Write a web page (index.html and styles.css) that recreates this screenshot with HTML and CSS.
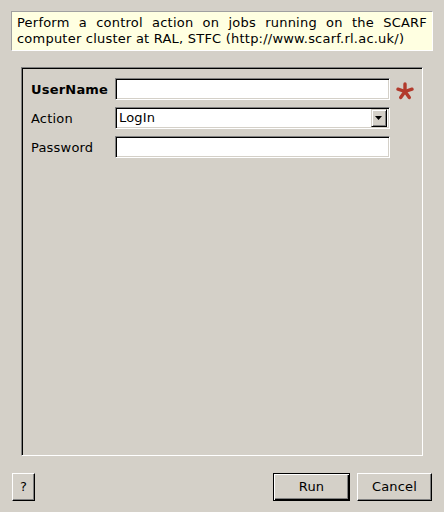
FILE: index.html
```html
<!DOCTYPE html>
<html>
<head>
<meta charset="utf-8">
<link rel="stylesheet" href="styles.css">
</head>
<body>
<div class="dialog">
  <div class="info">Perform a control action on jobs running on the SCARF computer cluster at RAL, STFC (http://www.scarf.rl.ac.uk/)</div>
  <div class="group">
    <div class="form">
      <label class="lbl bold">UserName</label>
      <div class="field"></div>
      <svg class="star" width="18" height="18" viewBox="0 0 18 18">
        <g stroke="#b23a2c" stroke-width="3.4" stroke-linecap="round">
          <line x1="9" y1="9.5" x2="9" y2="2"/>
          <line x1="9" y1="9.5" x2="16" y2="7.2"/>
          <line x1="9" y1="9.5" x2="2" y2="7.2"/>
          <line x1="9" y1="9.5" x2="13.3" y2="15.5"/>
          <line x1="9" y1="9.5" x2="4.7" y2="15.5"/>
        </g>
      </svg>
      <label class="lbl">Action</label>
      <div class="field combo"><span class="ctext">LogIn</span><span class="arrow"><svg width="8" height="5" viewBox="0 0 8 5"><path d="M0 0H7L3.5 4Z" fill="#000"/></svg></span></div>
      <span></span>
      <label class="lbl">Password</label>
      <div class="field"></div>
      <span></span>
    </div>
  </div>
  <div class="buttons">
    <button class="btn help">?</button>
    <span class="spacer"></span>
    <button class="btn run">Run</button>
    <button class="btn cancel">Cancel</button>
  </div>
</div>
</body>
</html>
```
FILE: styles.css
```css
html, body {
  margin: 0;
  padding: 0;
}
body {
  width: 444px;
  height: 512px;
  background: #d4d0c8;
  font-family: "DejaVu Sans", "Liberation Sans", sans-serif;
  font-size: 13px;
  letter-spacing: 0.2px;
  color: #000;
  overflow: hidden;
}
.dialog {
  display: flex;
  flex-direction: column;
  height: 512px;
}
.info {
  margin: 11px 11px 0 11px;
  height: 40px;
  box-sizing: border-box;
  padding: 3px 5px 0 5px;
  background: #ffffe1;
  border: 1px solid;
  border-color: #a0a0a0 #ffffff #ffffff #a0a0a0;
  text-align: justify;
  line-height: 16px;
  letter-spacing: 0.22px;
}
.group {
  margin: 16px 21px 0 21px;
  height: 389px;
  box-sizing: border-box;
  border: 1px solid;
  border-color: #808080 #ffffff #ffffff #808080;
  box-shadow: inset 1px 1px 0 #000;
  padding: 10px 0 0 9px;
}
.form {
  display: grid;
  grid-template-columns: 84px 275px 30px;
  grid-auto-rows: 22px;
  row-gap: 7px;
  align-items: center;
}
.lbl {
  line-height: 22px;
  padding-top: 1px;
}
.bold {
  font-weight: bold;
}
.field {
  height: 22px;
  box-sizing: border-box;
  background: #fff;
  border: 1px solid;
  border-color: #808080 #ffffff #ffffff #808080;
  box-shadow: inset 1px 1px 0 #000, inset -1px -1px 0 #d4d0c8;
}
.combo {
  display: flex;
  align-items: center;
  padding: 2px 2px 2px 3px;
}
.ctext {
  flex: 1;
  line-height: 16px;
}
.arrow {
  width: 16px;
  height: 18px;
  box-sizing: border-box;
  background: #d4d0c8;
  border: 1px solid;
  border-color: #d4d0c8 #000 #000 #d4d0c8;
  box-shadow: inset 1px 1px 0 #fff, inset -1px -1px 0 #808080;
  display: flex;
  align-items: center;
  justify-content: center;
}
.arrow svg {
  display: block;
  margin-top: 1px;
}
.star {
  display: block;
  margin-left: 6px;
  margin-top: 3px;
}
.buttons {
  display: flex;
  align-items: flex-start;
  margin: 17px 12px 0 12px;
}
.spacer {
  flex: 1;
}
.btn {
  font-family: "DejaVu Sans", "Liberation Sans", sans-serif;
  font-size: 13px;
  letter-spacing: 0.2px;
  color: #000;
  background: #d4d0c8;
  height: 28px;
  box-sizing: border-box;
  border: 1px solid;
  border-color: #fff #000 #000 #fff;
  box-shadow: inset -1px -1px 0 #808080;
  padding: 0 0 1px 0;
  margin: 0;
}
.help {
  width: 23px;
}
.run {
  width: 77px;
  border: 1px solid #000;
  box-shadow: inset 1px 1px 0 #fff, inset -1px -1px 0 #000, inset -2px -2px 0 #808080;
}
.cancel {
  width: 75px;
  margin-left: 7px;
}
```
